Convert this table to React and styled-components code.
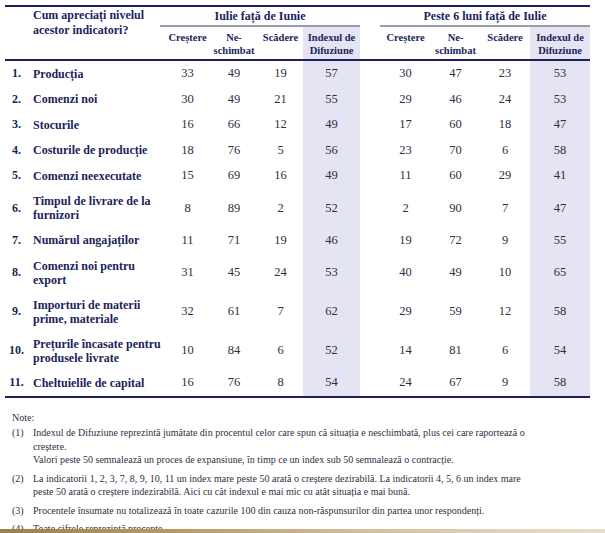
import React from 'react';
import styled, { createGlobalStyle } from 'styled-components';

const SERIF = '"Liberation Serif", "Times New Roman", serif';

const GlobalStyle = createGlobalStyle`
  html, body { margin: 0; padding: 0; background: #fff; }
  body { font-family: ${SERIF}; }
`;

const NAVY = '#201f5c';
const INK = '#2e2e44';
const SHADE = '#e4e4f2';

const rows = [
  ['1.', ['Producția'], [33, 49, 19, 57], [30, 47, 23, 53]],
  ['2.', ['Comenzi noi'], [30, 49, 21, 55], [29, 46, 24, 53]],
  ['3.', ['Stocurile'], [16, 66, 12, 49], [17, 60, 18, 47]],
  ['4.', ['Costurile de producție'], [18, 76, 5, 56], [23, 70, 6, 58]],
  ['5.', ['Comenzi neexecutate'], [15, 69, 16, 49], [11, 60, 29, 41]],
  ['6.', ['Timpul de livrare de la', 'furnizori'], [8, 89, 2, 52], [2, 90, 7, 47]],
  ['7.', ['Numărul angajaților'], [11, 71, 19, 46], [19, 72, 9, 55]],
  ['8.', ['Comenzi noi pentru', 'export'], [31, 45, 24, 53], [40, 49, 10, 65]],
  ['9.', ['Importuri de materii', 'prime, materiale'], [32, 61, 7, 62], [29, 59, 12, 58]],
  ['10.', ['Prețurile încasate pentru', 'produsele livrate'], [10, 84, 6, 52], [14, 81, 6, 54]],
  ['11.', ['Cheltuielile de capital'], [16, 76, 8, 54], [24, 67, 9, 58]],
];

// num, label, then 4 + gap + 4 value columns
const widths = [23, 132, 50, 48, 45, 57, 20, 51, 49, 50, 60];

const notes = [
  ['(1)', [
    'Indexul de Difuziune reprezintă jumătate din procentul celor care spun că situația e neschimbată, plus cei care raportează o',
    'creștere.',
    'Valori peste 50 semnalează un proces de expansiune, în timp ce un index sub 50 semnalează o contracție.',
  ]],
  ['(2)', [
    'La indicatorii 1, 2, 3, 7, 8, 9, 10, 11 un index mare peste 50 arată o creștere dezirabilă. La indicatorii 4, 5, 6 un index mare',
    'peste 50 arată o creștere indezirabilă. Aici cu cât indexul e mai mic cu atât situația e mai bună.',
  ]],
  ['(3)', ['Procentele însumate nu totalizează în toate cazurile 100 din cauza non-răspunsurilor din partea unor respondenți.']],
  ['(4)', ['Toate cifrele reprezintă procente.']],
];

const App = () => {
  return (
    <Page>
      <GlobalStyle />
      <Table>
        <colgroup>
          {widths.map((w, i) => <col key={i} style={{ width: w }} />)}
        </colgroup>
        <thead>
          <tr>
            <Question colSpan={2} rowSpan={2}>Cum apreciați nivelul<br />acestor indicatori?</Question>
            <Group colSpan={4}>Iulie față de Iunie</Group>
            <Spacer />
            <Group colSpan={4}>Peste 6 luni față de Iulie</Group>
          </tr>
          <tr>
            <Sub $pad={5}>Creștere</Sub>
            <Sub>Ne-<br />schimbat</Sub>
            <Sub>Scădere</Sub>
            <Sub $shade>Indexul de<br />Difuziune</Sub>
            <Sub />
            <Sub>Creștere</Sub>
            <Sub>Ne-<br />schimbat</Sub>
            <Sub>Scădere</Sub>
            <Sub $shade>Indexul de<br />Difuziune</Sub>
          </tr>
        </thead>
        <tbody>
          {rows.map(([n, label, a, b]) => (
            <Row key={n} $tall={label.length > 1}>
              <Index>{n}</Index>
              <Label>{label.map((l, i) => <span key={i}>{i > 0 && <br />}{l}</span>)}</Label>
              {a.map((v, i) => <Value key={'a' + i} $shade={i === 3} $pad={i === 0 ? 5 : 0}>{v}</Value>)}
              <Value />
              {b.map((v, i) => <Value key={'b' + i} $shade={i === 3}>{v}</Value>)}
            </Row>
          ))}
        </tbody>
      </Table>
      <Notes>
        <NoteTitle>Note:</NoteTitle>
        {notes.map(([k, lines]) => (
          <NoteItem key={k}>
            <NoteKey>{k}</NoteKey>
            <NoteText>{lines.map((l, i) => <span key={i}>{i > 0 && <br />}{l}</span>)}</NoteText>
          </NoteItem>
        ))}
      </Notes>
      <Band />
    </Page>
  );
};

export default App;

const Page = styled.div`
  width: 605px;
  height: 533px;
  display: flex;
  flex-direction: column;
  overflow: hidden;
  padding-top: 5px;
  box-sizing: border-box;
  font-family: ${SERIF};
`;

const Table = styled.table`
  margin-left: 5px;
  width: 585px;
  table-layout: fixed;
  border-collapse: separate;
  border-spacing: 0;
  border-top: 2px solid ${NAVY};
  border-bottom: 2px solid ${NAVY};
  color: ${NAVY};
  td, th { padding: 0; font-family: ${SERIF}; }
`;

const Question = styled.th`
  text-align: left;
  vertical-align: top;
  padding: 1px 0 0 28px !important;
  font-size: 12px;
  line-height: 15px;
  font-weight: bold;
  border-bottom: 2px solid ${NAVY};
`;

const Group = styled.th`
  height: 18px;
  font-size: 12px;
  line-height: 15px;
  font-weight: bold;
  text-align: center;
  vertical-align: middle;
  border-bottom: 2px solid #9a9aae;
`;

const Spacer = styled.th``;

const Sub = styled.th`
  height: 28px;
  padding-top: 4px !important;
  padding-left: ${p => p.$pad || 0}px !important;
  vertical-align: top;
  text-align: center;
  font-size: 10.5px;
  line-height: 13px;
  font-weight: bold;
  background: ${p => (p.$shade ? SHADE : 'transparent')};
  border-bottom: 2px solid ${NAVY};
`;

const Row = styled.tr`
  height: ${p => (p.$tall ? '39px' : '25.5px')};
`;

const Index = styled.td`
  text-align: center;
  vertical-align: middle;
  font-size: 12px;
  font-weight: bold;
`;

const Label = styled.td`
  padding-left: 5px !important;
  vertical-align: middle;
  font-size: 12px;
  line-height: 14px;
  font-weight: bold;
  white-space: nowrap;
`;

const Value = styled.td`
  text-align: center;
  vertical-align: middle;
  padding-left: ${p => p.$pad || 0}px !important;
  font-size: 12.5px;
  color: ${INK};
  background: ${p => (p.$shade ? SHADE : 'transparent')};
`;

const Notes = styled.div`
  flex: 1;
  overflow: hidden;
  padding: 13px 0 0 12px;
  font-size: 10px;
  line-height: 13.5px;
  color: #2f2f3e;
`;

const NoteTitle = styled.div`
  margin-bottom: 2px;
`;

const NoteItem = styled.div`
  display: flex;
  margin-bottom: 5px;
`;

const NoteKey = styled.span`
  width: 21px;
  flex: none;
`;

const NoteText = styled.span`
  white-space: nowrap;
`;

const Band = styled.div`
  height: 4px;
  flex: none;
  background: linear-gradient(to right, #9e7f4c 0%, #b89c68 30%, #d4c6a4 65%, #e6dfcf 100%);
`;
